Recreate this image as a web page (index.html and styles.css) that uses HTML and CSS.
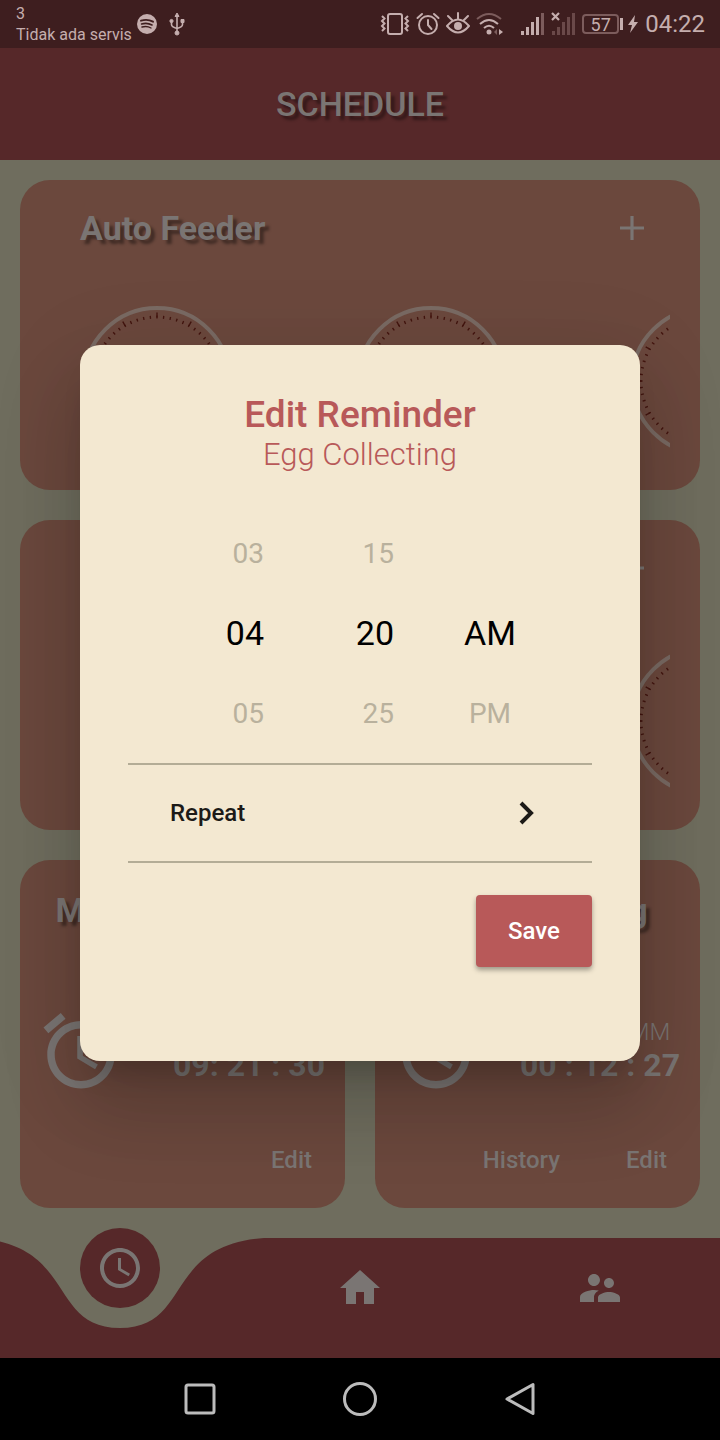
FILE: index.html
```html
<!DOCTYPE html>
<html lang="id">
<head>
<meta charset="utf-8">
<meta name="viewport" content="width=device-width, initial-scale=1">
<title>Schedule</title>
<link rel="stylesheet" href="styles.css">
</head>
<body>
<svg class="defs" aria-hidden="true">
  <symbol id="dial" viewBox="0 0 150 150">
    <circle cx="75" cy="75" r="73" fill="none" stroke="#796a63" stroke-width="4"/>
    <circle cx="75" cy="75" r="64" fill="none" stroke="#43150f" stroke-width="3" pathLength="360" stroke-dasharray="1.2 4.8" stroke-dashoffset="0.6"/>
    <circle cx="75" cy="75" r="66" fill="none" stroke="#43150f" stroke-width="5" pathLength="360" stroke-dasharray="1.2 28.8" stroke-dashoffset="0.6"/>
  </symbol>
  <symbol id="alarm" viewBox="0 0 24 24">
    <path d="M22 5.72l-4.6-3.86-1.29 1.53 4.6 3.86L22 5.72zM7.88 3.39L6.6 1.86 2 5.71l1.29 1.53 4.59-3.85zM12.5 8H11v6l4.75 2.85.75-1.23-4-2.37V8zM12 4c-4.97 0-9 4.03-9 9s4.02 9 9 9c4.97 0 9-4.03 9-9s-4.03-9-9-9zm0 16c-3.87 0-7-3.13-7-7s3.13-7 7-7 7 3.13 7 7-3.13 7-7 7z"/>
  </symbol>
  <symbol id="plus" viewBox="0 0 24 24"><path d="M0 10.4h10.4V0h3.2v10.4H24v3.2H13.6V24h-3.2V13.6H0z"/></symbol>
</svg>

<div class="phone">
  <div class="status">
    <div class="carrier"><span>3</span><span>Tidak ada servis</span></div>
    <div class="notices">
      <svg width="20" height="20" viewBox="0 0 20 20"><circle cx="10" cy="10" r="10" fill="#c5aeae"/><g fill="none" stroke="#3e1e1f" stroke-linecap="round"><path d="M4 6.7Q10.500 4.700 16 7.700" stroke-width="1.900"/><path d="M4.600 10Q10.200 8.300 15 11" stroke-width="1.600"/><path d="M5 13Q10 11.600 14 14" stroke-width="1.400"/></g></svg>
      <svg width="16" height="24" viewBox="0 0 16 24" fill="#c5aeae" stroke="#c5aeae"><path d="M8 3v18M2.500 9v3.500Q2.500 15 8 16.500Q13.500 15 13.500 12.500V9" fill="none" stroke-width="1.600"/><path d="M8 1l2 3.500H6z"/><circle cx="2.500" cy="9" r="1.600"/><path d="M12 7.500h3v3h-3z"/><circle cx="8" cy="21" r="2"/></svg>
    </div>
    <div class="indicators">
      <svg width="30" height="24" viewBox="0 0 30 24" fill="none" stroke="#c5aeae" stroke-width="2"><rect x="8" y="2" width="14" height="20" rx="2"/><path d="M2 4l2.500 2.500L2 9l2.500 2.500L2 14l2.500 2.500L2 19M28 4l-2.500 2.500L28 9l-2.500 2.500L28 14l-2.500 2.500L28 19"/></svg>
      <svg width="24" height="24" viewBox="0 0 24 24" fill="none" stroke="#c5aeae" stroke-width="2"><circle cx="12" cy="13" r="9"/><path d="M12 8v5l3.500 4M1.500 6l4.500-4M22.500 6L18 2" stroke-linecap="round"/></svg>
      <svg width="24" height="24" viewBox="0 0 24 24" fill="none" stroke="#c5aeae" stroke-width="2"><path d="M1 14Q12 1 23 14Q12 27 1 14zM12 7V1M6 8L2 4M18 8l4-4" stroke-linecap="round"/><circle cx="12" cy="14" r="4" fill="#c5aeae" stroke="none"/></svg>
      <svg width="28" height="24" viewBox="0 0 28 24" fill="none" stroke="#c5aeae" stroke-width="2"><path d="M1 7Q13-3 25 7" stroke="#7c5c5c"/><path d="M4 12Q13 4 22 12M8 16Q13 11.500 18 16"/><circle cx="13" cy="20" r="2.500" fill="#c5aeae" stroke="none"/><path d="M21 17v6l-3-3z" fill="#7c5c5c" stroke="none"/><path d="M23 17v6l4-3z" fill="#c5aeae" stroke="none"/></svg>
      <svg class="signal" width="24" height="24" viewBox="0 0 24 24" fill="#c5aeae"><rect x="1" y="19" width="3" height="4"/><rect x="6" y="15" width="3" height="8"/><rect x="11" y="10" width="3" height="13"/><rect x="16" y="5" width="3" height="18"/><rect x="21" y="1" width="3" height="22" fill="#7c5c5c"/></svg>
      <svg width="26" height="24" viewBox="0 0 26 24" fill="#6a4949"><rect x="2" y="19" width="3" height="4"/><rect x="7" y="15" width="3" height="8"/><rect x="12" y="10" width="3" height="13"/><rect x="17" y="5" width="3" height="18"/><rect x="22" y="1" width="3" height="22"/><path d="M2 1l7 7M9 1L2 8" stroke="#c5aeae" stroke-width="2.200"/></svg>
      <span class="battery">57</span>
      <svg width="12" height="18" viewBox="0 0 12 18" fill="#c5aeae"><path d="M8 0L1 10h4l-2 8 8-11H7z"/></svg>
      <time class="now">04:22</time>
    </div>
  </div>

  <div class="app">
    <header class="topbar"><h1>SCHEDULE</h1></header>

    <main class="content">
      <section class="card feeder">
        <div class="card-head"><h2>Auto Feeder</h2><button class="add" type="button" aria-label="Add feeder time"><svg><use href="#plus"/></svg></button></div>
        <div class="dials"><svg><use href="#dial"/></svg><svg><use href="#dial"/></svg><svg><use href="#dial"/></svg></div>
      </section>
      <section class="card feeder">
        <div class="card-head"><button class="add" type="button" aria-label="Add time"><svg><use href="#plus"/></svg></button></div>
        <div class="dials"><svg><use href="#dial"/></svg><svg><use href="#dial"/></svg><svg><use href="#dial"/></svg></div>
      </section>
      <div class="pair">
        <section class="card reminder">
          <h2>Medicine Feeder</h2>
          <div class="count"><svg><use href="#alarm"/></svg><div class="left"><small>DD : HH : MM</small><strong>09: 21 : 30</strong></div></div>
          <div class="actions"><button type="button">Edit</button></div>
        </section>
        <section class="card reminder">
          <h2>Egg Collecting</h2>
          <div class="count"><svg><use href="#alarm"/></svg><div class="left"><small>DD : HH : MM</small><strong>00 : 12 : 27</strong></div></div>
          <div class="actions"><button type="button">History</button><button type="button">Edit</button></div>
        </section>
      </div>
    </main>

    <nav class="tabs">
      <svg class="wave" viewBox="0 0 720 120" preserveAspectRatio="none"><path d="M-24 0C77 7 48 90 120 90C192 90 163 7 264 0H720V120H-24z" fill="#562829"/></svg>
      <a class="tab active" href="#schedule" aria-label="Schedule"><svg viewBox="0 0 24 24"><path d="M11.990 2C6.470 2 2 6.480 2 12s4.470 10 9.990 10C17.520 22 22 17.520 22 12S17.520 2 11.990 2zM12 20c-4.420 0-8-3.580-8-8s3.580-8 8-8 8 3.580 8 8-3.580 8-8 8zm.5-13H11v6l5.250 3.150.75-1.230-4.500-2.670z"/></svg></a>
      <a class="tab" href="#home" aria-label="Home"><svg viewBox="0 0 24 24"><path d="M10 20v-6h4v6h5v-8h3L12 3 2 12h3v8z"/></svg></a>
      <a class="tab" href="#users" aria-label="Users"><svg viewBox="0 0 24 24"><path d="M16.500 12c1.380 0 2.490-1.120 2.490-2.500S17.880 7 16.500 7C15.120 7 14 8.120 14 9.500s1.120 2.500 2.500 2.500zM9 11c1.660 0 2.990-1.340 2.990-3S10.660 5 9 5C7.340 5 6 6.340 6 8s1.340 3 3 3zm7.500 3c-1.830 0-5.500.92-5.500 2.750V19h11v-2.250c0-1.830-3.670-2.750-5.500-2.750zM9 13c-2.330 0-7 1.170-7 3.500V19h7v-2.250c0-.85.33-2.340 2.370-3.470C10.500 13.100 9.660 13 9 13z"/></svg></a>
    </nav>

    <div class="overlay">
      <section class="dialog" role="dialog" aria-labelledby="dialog-title">
        <h2 id="dialog-title">Edit Reminder</h2>
        <p class="subject">Egg Collecting</p>
        <div class="picker">
          <span>03</span><span>15</span><span class="period"></span>
          <span class="picked">04</span><span class="picked">20</span><span class="picked period">AM</span>
          <span>05</span><span>25</span><span class="period">PM</span>
        </div>
        <button class="repeat" type="button">Repeat<svg width="16" height="24" viewBox="0 0 16 24"><path d="M2 2l10 10L2 22" fill="none" stroke="#1c1a17" stroke-width="4"/></svg></button>
        <button class="save" type="button">Save</button>
      </section>
    </div>
  </div>

  <div class="sysnav">
    <button type="button" aria-label="Recent apps"><svg viewBox="0 0 36 36"><rect x="4" y="4" width="28" height="28" rx="2"/></svg></button>
    <button type="button" aria-label="Home screen"><svg viewBox="0 0 36 36"><circle cx="18" cy="18" r="15.500"/></svg></button>
    <button type="button" aria-label="Back"><svg viewBox="0 0 36 36"><path d="M31 3.500V32.500L5 18z" stroke-linejoin="round"/></svg></button>
  </div>
</div>
</body>
</html>
```

FILE: styles.css
```css
* { box-sizing: border-box; }
body {
  margin: 0;
  background: #000;
  font-family: Roboto, "Liberation Sans", sans-serif;
}
h1, h2, p { margin: 0; }
svg { display: block; }
button {
  padding: 0;
  border: 0;
  background: none;
  color: inherit;
  font: inherit;
}
.defs { position: absolute; width: 0; height: 0; }
.phone {
  display: flex;
  flex-direction: column;
  min-height: 100vh;
}

/* Status bar */
.status {
  display: flex;
  align-items: center;
  height: 48px;
  padding: 0 15px 0 16px;
  background: #3e1e1f;
  color: #c5aeae;
}
.carrier {
  display: flex;
  flex-direction: column;
  font-size: 16px;
  line-height: 21px;
}
.notices { display: flex; align-items: center; gap: 12px; margin-left: 5px; }
.indicators { display: flex; align-items: center; gap: 6px; margin-left: auto; }
.signal { margin-left: 10px; }
.battery {
  position: relative;
  width: 37px;
  height: 20px;
  margin-right: 2px;
  border: 2px solid #7c5c5c;
  border-radius: 4px;
  font-size: 18px;
  line-height: 17px;
  text-align: center;
}
.battery::after {
  content: "";
  position: absolute;
  top: 2px;
  right: -6px;
  width: 3px;
  height: 12px;
  background: #c5aeae;
}
.now { font-size: 24px; }

/* Application */
.app {
  position: relative;
  flex: 1;
  display: flex;
  flex-direction: column;
  background: #6f6d5e;
  color: #7a7573;
}
.topbar {
  display: grid;
  place-items: center;
  height: 112px;
  background: #562829;
}
h1 { font-size: 34px; font-weight: 500; }
h1, .card h2 { text-shadow: 4px 4px 3px rgba(0, 0, 0, 0.4); }
.content {
  flex: 1;
  display: flex;
  flex-direction: column;
  gap: 30px;
  padding: 20px 20px 30px;
}
.card { border-radius: 30px; background: #6b483d; }
.card h2 { font-size: 34px; font-weight: 700; line-height: 40px; }
.feeder { height: 310px; padding: 28px 30px; }
.card-head {
  display: flex;
  align-items: center;
  height: 40px;
  padding: 0 26px 0 30px;
}
.add { margin-left: auto; }
.add svg { width: 24px; height: 24px; fill: currentColor; }
.dials {
  display: flex;
  gap: 124px;
  margin-top: 58px;
  padding-left: 32px;
  overflow: hidden;
}
.dials svg { flex: none; width: 150px; height: 150px; }
.pair { display: grid; grid-template-columns: 1fr 1fr; gap: 30px; }
.reminder { height: 348px; padding: 30px 20px 34px 16px; display: flex; flex-direction: column; }
.reminder h2 { padding-left: 4px; text-align: center; white-space: nowrap; }
.count {
  display: flex;
  align-items: center;
  justify-content: space-between;
  margin-top: 76px;
}
.count svg { width: 90px; height: 90px; fill: currentColor; }
.left { display: flex; flex-direction: column; align-items: center; }
.left small { font-size: 24px; font-weight: 300; line-height: 28px; }
.left strong { font-size: 32px; line-height: 38px; }
.actions {
  display: flex;
  justify-content: flex-end;
  gap: 66px;
  margin-top: auto;
  padding-right: 13px;
  font-size: 24px;
  font-weight: 500;
  line-height: 28px;
}

/* Bottom tabs */
.tabs {
  position: relative;
  display: grid;
  grid-template-columns: repeat(3, 1fr);
  align-items: start;
  justify-items: center;
  height: 120px;
}
.wave { position: absolute; inset: 0; width: 100%; height: 100%; }
.tab { position: relative; margin-top: 26px; color: #7a7573; }
.tab svg { width: 48px; height: 48px; fill: currentColor; }
.tab.active {
  margin-top: -10px;
  padding: 16px;
  border-radius: 50%;
  background: #562829;
}

/* Dialog */
.overlay {
  position: absolute;
  inset: 0;
  display: grid;
  align-items: center;
  padding: 0 80px;
}
.dialog {
  display: flex;
  flex-direction: column;
  padding: 48px 48px 94px;
  border-radius: 20px;
  background: #f3e8d1;
  color: #b85959;
  text-align: center;
  box-shadow: 0 22px 30px -14px rgba(0, 0, 0, 0.2), 0 48px 76px 6px rgba(0, 0, 0, 0.14), 0 18px 92px 16px rgba(0, 0, 0, 0.06);
}
.dialog h2 { font-size: 37px; font-weight: 500; line-height: 43px; }
.subject { font-size: 31px; font-weight: 300; line-height: 37px; }
.picker {
  display: grid;
  grid-template-columns: 130px 130px 192px;
  grid-auto-rows: 80px;
  align-items: center;
  justify-content: center;
  margin: 40px 0 10px;
  color: #b9b19d;
  font-size: 28px;
  text-align: right;
}
.picker .picked { color: #000; font-size: 34px; }
.picker .period { text-align: center; }
.repeat {
  display: flex;
  align-items: center;
  justify-content: space-between;
  height: 100px;
  padding: 0 57px 0 42px;
  border: solid #b3ac96;
  border-width: 2px 0;
  color: #1c1a17;
  font-size: 24px;
  font-weight: 500;
}
.save {
  align-self: flex-end;
  width: 116px;
  height: 72px;
  margin-top: 32px;
  border-radius: 4px;
  background: #b85959;
  color: #fff;
  font-size: 24px;
  font-weight: 500;
  box-shadow: 0 3px 5px rgba(0, 0, 0, 0.35);
}

/* System navigation */
.sysnav {
  display: flex;
  align-items: center;
  justify-content: center;
  gap: 124px;
  height: 82px;
  background: #000;
}
.sysnav svg {
  width: 36px;
  height: 36px;
  fill: none;
  stroke: #bcbcbc;
  stroke-width: 3;
}
```
